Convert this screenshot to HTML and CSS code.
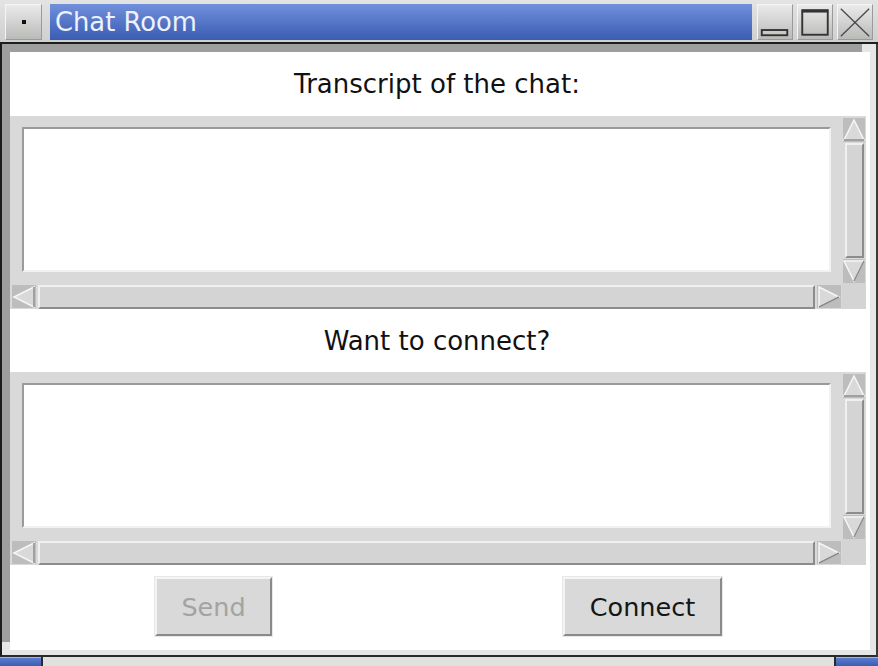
FILE: index.html
```html
<!DOCTYPE html>
<html>
<head>
<meta charset="utf-8">
<link rel="stylesheet" href="styles.css">
</head>
<body>
<div class="window">
  <div class="titlebar">
    <div class="tbtn menu-btn"><span class="dot"></span></div>
    <div class="title">Chat Room</div>
    <div class="tbtn">
      <svg width="36" height="36" viewBox="0 0 36 36"><rect x="4" y="26.5" width="27" height="5.5" fill="#c8cac6" stroke="#333" stroke-width="2"/></svg>
    </div>
    <div class="tbtn">
      <svg width="36" height="36" viewBox="0 0 36 36"><rect x="4.5" y="5.5" width="27" height="26" fill="none" stroke="#333" stroke-width="2"/><line x1="4" y1="6.5" x2="32" y2="6.5" stroke="#333" stroke-width="3"/></svg>
    </div>
    <div class="tbtn">
      <svg width="36" height="36" viewBox="0 0 36 36"><line x1="3" y1="4" x2="33" y2="33" stroke="#4a4a4a" stroke-width="1.4"/><line x1="33" y1="4" x2="3" y2="33" stroke="#4a4a4a" stroke-width="1.4"/></svg>
    </div>
  </div>
  <div class="frame">
    <div class="client">
      <div class="label">Transcript of the chat:</div>
      <div class="textblock">
        <div class="textframe"><div class="textbox"></div></div>
        <div class="vscroll">
          <svg class="arr" width="24" height="26" viewBox="0 0 24 26"><rect x="1" y="1" width="22" height="24" fill="#bdbdbd"/><polygon points="12,3 22,23 2,23" fill="#d9d9d9" stroke="#f6f6f6" stroke-width="1.5"/><line x1="22" y1="23" x2="2" y2="23" stroke="#888" stroke-width="1.5"/></svg>
          <div class="vslider"></div>
          <svg class="arr" width="24" height="24" viewBox="0 0 24 24"><rect x="1" y="0" width="22" height="24" fill="#bdbdbd"/><polygon points="2,2 22,2 12,22" fill="#d9d9d9" stroke="#f6f6f6" stroke-width="1.5"/><line x1="22" y1="2" x2="12" y2="22" stroke="#888" stroke-width="1.5"/></svg>
        </div>
        <div class="hscroll">
          <svg class="arr" width="26" height="24" viewBox="0 0 26 24"><rect x="1" y="0" width="24" height="23" fill="#bdbdbd"/><polygon points="3,12 23,2 23,22" fill="#d9d9d9" stroke="#f6f6f6" stroke-width="1.5"/><line x1="23" y1="2" x2="23" y2="22" stroke="#888" stroke-width="1.5"/></svg>
          <div class="hslider"></div>
          <svg class="arr" width="26" height="24" viewBox="0 0 26 24"><rect x="1" y="0" width="24" height="23" fill="#bdbdbd"/><polygon points="3,2 23,12 3,22" fill="#d9d9d9" stroke="#f6f6f6" stroke-width="1.5"/><line x1="23" y1="12" x2="3" y2="22" stroke="#888" stroke-width="1.5"/></svg>
        </div>
        <div class="corner"></div>
      </div>
      <div class="label label2">Want to connect?</div>
      <div class="textblock">
        <div class="textframe"><div class="textbox"></div></div>
        <div class="vscroll">
          <svg class="arr" width="24" height="26" viewBox="0 0 24 26"><rect x="1" y="1" width="22" height="24" fill="#bdbdbd"/><polygon points="12,3 22,23 2,23" fill="#d9d9d9" stroke="#f6f6f6" stroke-width="1.5"/><line x1="22" y1="23" x2="2" y2="23" stroke="#888" stroke-width="1.5"/></svg>
          <div class="vslider"></div>
          <svg class="arr" width="24" height="24" viewBox="0 0 24 24"><rect x="1" y="0" width="22" height="24" fill="#bdbdbd"/><polygon points="2,2 22,2 12,22" fill="#d9d9d9" stroke="#f6f6f6" stroke-width="1.5"/><line x1="22" y1="2" x2="12" y2="22" stroke="#888" stroke-width="1.5"/></svg>
        </div>
        <div class="hscroll">
          <svg class="arr" width="26" height="24" viewBox="0 0 26 24"><rect x="1" y="0" width="24" height="23" fill="#bdbdbd"/><polygon points="3,12 23,2 23,22" fill="#d9d9d9" stroke="#f6f6f6" stroke-width="1.5"/><line x1="23" y1="2" x2="23" y2="22" stroke="#888" stroke-width="1.5"/></svg>
          <div class="hslider"></div>
          <svg class="arr" width="26" height="24" viewBox="0 0 26 24"><rect x="1" y="0" width="24" height="23" fill="#bdbdbd"/><polygon points="3,2 23,12 3,22" fill="#d9d9d9" stroke="#f6f6f6" stroke-width="1.5"/><line x1="23" y1="12" x2="3" y2="22" stroke="#888" stroke-width="1.5"/></svg>
        </div>
        <div class="corner"></div>
      </div>
      <div class="buttons">
        <button class="btn btn-send" disabled>Send</button>
        <button class="btn btn-connect">Connect</button>
      </div>
    </div>
  </div>
  <div class="taskbar">
    <div class="task-blue task-left"></div>
    <div class="task-mid"></div>
    <div class="task-blue task-right"></div>
  </div>
</div>
</body>
</html>
```

FILE: styles.css
```css
html, body {
  margin: 0;
  padding: 0;
  background: #d4d4d4;
}
.window {
  width: 878px;
  height: 666px;
  display: flex;
  flex-direction: column;
  font-family: "DejaVu Sans", sans-serif;
  background: #d4d4d4;
  overflow: hidden;
}
.titlebar {
  height: 44px;
  flex: none;
  box-sizing: border-box;
  padding: 4px 5px 2px 5px;
  display: flex;
  gap: 4px;
  background: linear-gradient(#e4e4e4, #cfcfcf);
  border-bottom: 2px solid #1e1e1e;
}
.tbtn {
  width: 36px;
  height: 36px;
  box-sizing: border-box;
  background: linear-gradient(#eaeaea, #b9bbb8);
  border: 1px solid #9a9a9a;
  border-top-color: #f5f5f5;
  border-left-color: #f5f5f5;
  display: flex;
  align-items: center;
  justify-content: center;
  flex: none;
}
.tbtn svg { display: block; }
.menu-btn { width: 37px; margin-right: 4px; }
.dot {
  width: 4px;
  height: 4px;
  background: #111;
}
.title {
  flex: 1;
  height: 36px;
  margin-right: 1px;
  background: linear-gradient(#7190dc, #3a5cb2);
  color: #eef2fc;
  font-size: 25.8px;
  line-height: 36px;
  padding-left: 5px;
  box-sizing: border-box;
}
.frame {
  height: 613px;
  flex: none;
  box-sizing: border-box;
  border-left: 2px solid #1c1c1c;
  border-right: 2px solid #3a3a3a;
  border-bottom: 2px solid #2a2a2a;
  background: #e6e6e6;
  display: flex;
}
.client {
  margin: 8px 6px 5px 8px;
  flex: 1;
  background: #fff;
  display: flex;
  flex-direction: column;
  box-shadow: -8px -8px 0 0 #9e9e9e;
}
.label {
  height: 64px;
  display: flex;
  align-items: center;
  justify-content: center;
  font-size: 26px;
  color: #111;
  padding-right: 6px;
}
.label2 { height: 63px; padding-top: 1px; box-sizing: border-box; }
.textblock {
  display: grid;
  grid-template-columns: 832px 24px;
  grid-template-rows: 167px 26px;
  row-gap: 0;
}
.textframe {
  background: #d9d9d9;
  padding: 11px 11px 11px 12px;
  box-sizing: border-box;
}
.textbox {
  height: 100%;
  background: #fff;
  box-sizing: border-box;
  border: 2px solid #f2f2f2;
  border-top-color: #9a9a9a;
  border-left-color: #9a9a9a;
}
.vscroll {
  background: #d9d9d9;
  display: flex;
  flex-direction: column;
  padding-top: 1px;
}
.vscroll .arr { display: block; flex: none; }
.vslider {
  flex: 1;
  margin: 0 2px 1px 3px;
  background: #d4d4d4;
  border: 2px solid #8c8c8c;
  border-top-color: #f0f0f0;
  border-left-color: #f0f0f0;
}
.hscroll {
  background: #d9d9d9;
  display: flex;
  align-items: center;
  padding: 2px 0 0 1px;
  box-sizing: border-box;
}
.hscroll .arr { display: block; flex: none; }
.hslider {
  flex: 1;
  height: 20px;
  margin: 0 1px;
  background: #d4d4d4;
  border: 2px solid #8c8c8c;
  border-top-color: #f0f0f0;
  border-left-color: #f0f0f0;
}
.corner {
  background: #d4d4d4;
}
.buttons {
  flex: 1;
  display: flex;
  align-items: flex-start;
  padding: 12px 0 0 145px;
  gap: 291px;
}
.btn {
  height: 59px;
  font-family: "DejaVu Sans", sans-serif;
  font-size: 25.5px;
  background: #d9d9d9;
  border: 2px solid #8a8a8a;
  border-top-color: #f4f4f4;
  border-left-color: #f4f4f4;
  outline: 1px solid #e8e8e8;
  padding: 0;
}
.btn-send { width: 117px; color: #a3a3a3; }
.btn-connect { width: 159px; color: #151515; }
.taskbar {
  height: 9px;
  flex: none;
  display: flex;
  background: #2a2a2a;
  box-sizing: border-box;
}
.task-blue {
  background: linear-gradient(#5a7cd0, #3a5cb2);
  border-top: 1px solid #9fb3e6;
}
.task-left { width: 41px; }
.task-right { width: 42px; }
.task-mid {
  flex: 1;
  margin: 0 2px;
  background: #dfe2dc;
}
```
